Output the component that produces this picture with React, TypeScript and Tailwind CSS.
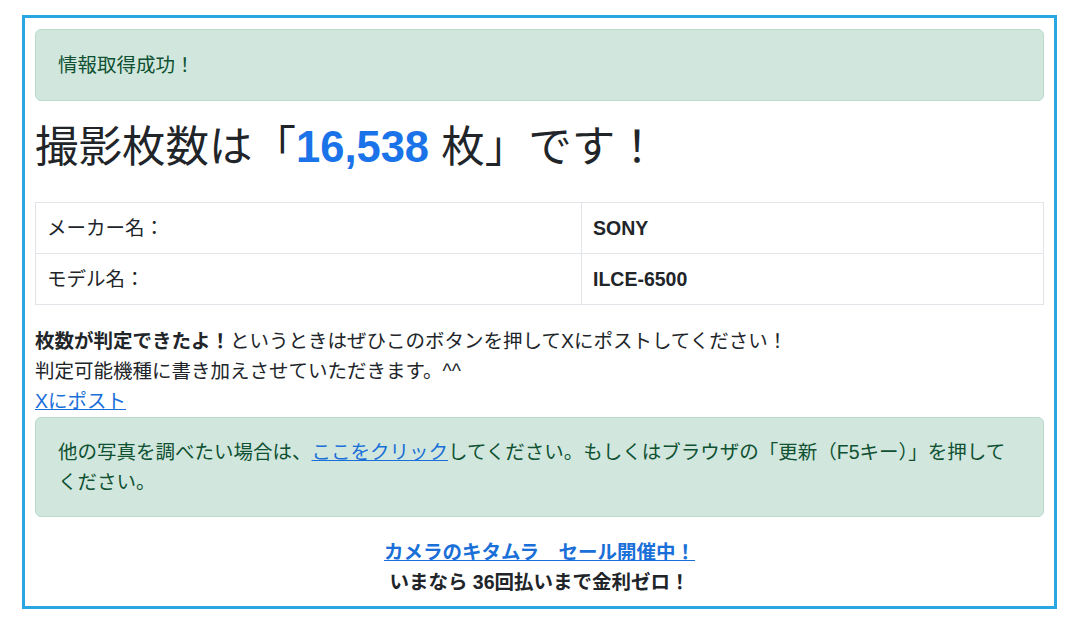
export default function App() {
  return (
    <div
      className="min-h-[622px] bg-white pt-[15px] text-[#212529]"
      style={{ fontFamily: '"Liberation Sans", "Noto Sans CJK JP", sans-serif' }}
    >
      <div className="ml-[22px] w-[1035px] border-[3px] border-[#2aa7e0] px-[10px] pt-[11px] pb-[9px] text-[19.5px] leading-[30px]">
        {/* success alert */}
        <div className="rounded-[6px] border border-[#badbcc] bg-[#d1e7dd] px-[22px] py-[20px] text-[#0f5132]">
          情報取得成功！
        </div>

        <h1 className="mt-[18px] mb-[27px] text-[43.5px] leading-[56px] font-normal">
          撮影枚数は「<span className="font-bold text-[#1a73e8]">16,538</span> 枚」です！
        </h1>

        <table className="w-full border-collapse border border-[#e1e4e8]">
          <tbody>
            <tr className="h-[51px]">
              <td className="w-[546px] border border-[#e1e4e8] px-[11px]">メーカー名：</td>
              <td className="border border-[#e1e4e8] px-[11px] font-bold">SONY</td>
            </tr>
            <tr className="h-[51px]">
              <td className="border border-[#e1e4e8] px-[11px]">モデル名：</td>
              <td className="border border-[#e1e4e8] px-[11px] font-bold">ILCE-6500</td>
            </tr>
          </tbody>
        </table>

        <p className="mt-[21px]">
          <b>枚数が判定できたよ！</b>というときはぜひこのボタンを押してXにポストしてください！
          <br />
          判定可能機種に書き加えさせていただきます。^^
          <br />
          <a href="#" className="text-[#1a6fd8] underline">
            Xにポスト
          </a>
        </p>

        {/* retry alert */}
        <div className="mt-px rounded-[6px] border border-[#badbcc] bg-[#d1e7dd] px-[22px] py-[19px] text-[#0f5132]">
          他の写真を調べたい場合は、
          <a href="#" className="text-[#1a6fd8] underline">
            ここをクリック
          </a>
          してください。もしくはブラウザの「更新（F5キー）」を押してください。
        </div>

        <div className="mt-[20px] text-center font-bold">
          <a href="#" className="text-[#1a6fd8] underline">
            カメラのキタムラ　セール開催中！
          </a>
          <div>いまなら 36回払いまで金利ゼロ！</div>
        </div>
      </div>
    </div>
  );
}
